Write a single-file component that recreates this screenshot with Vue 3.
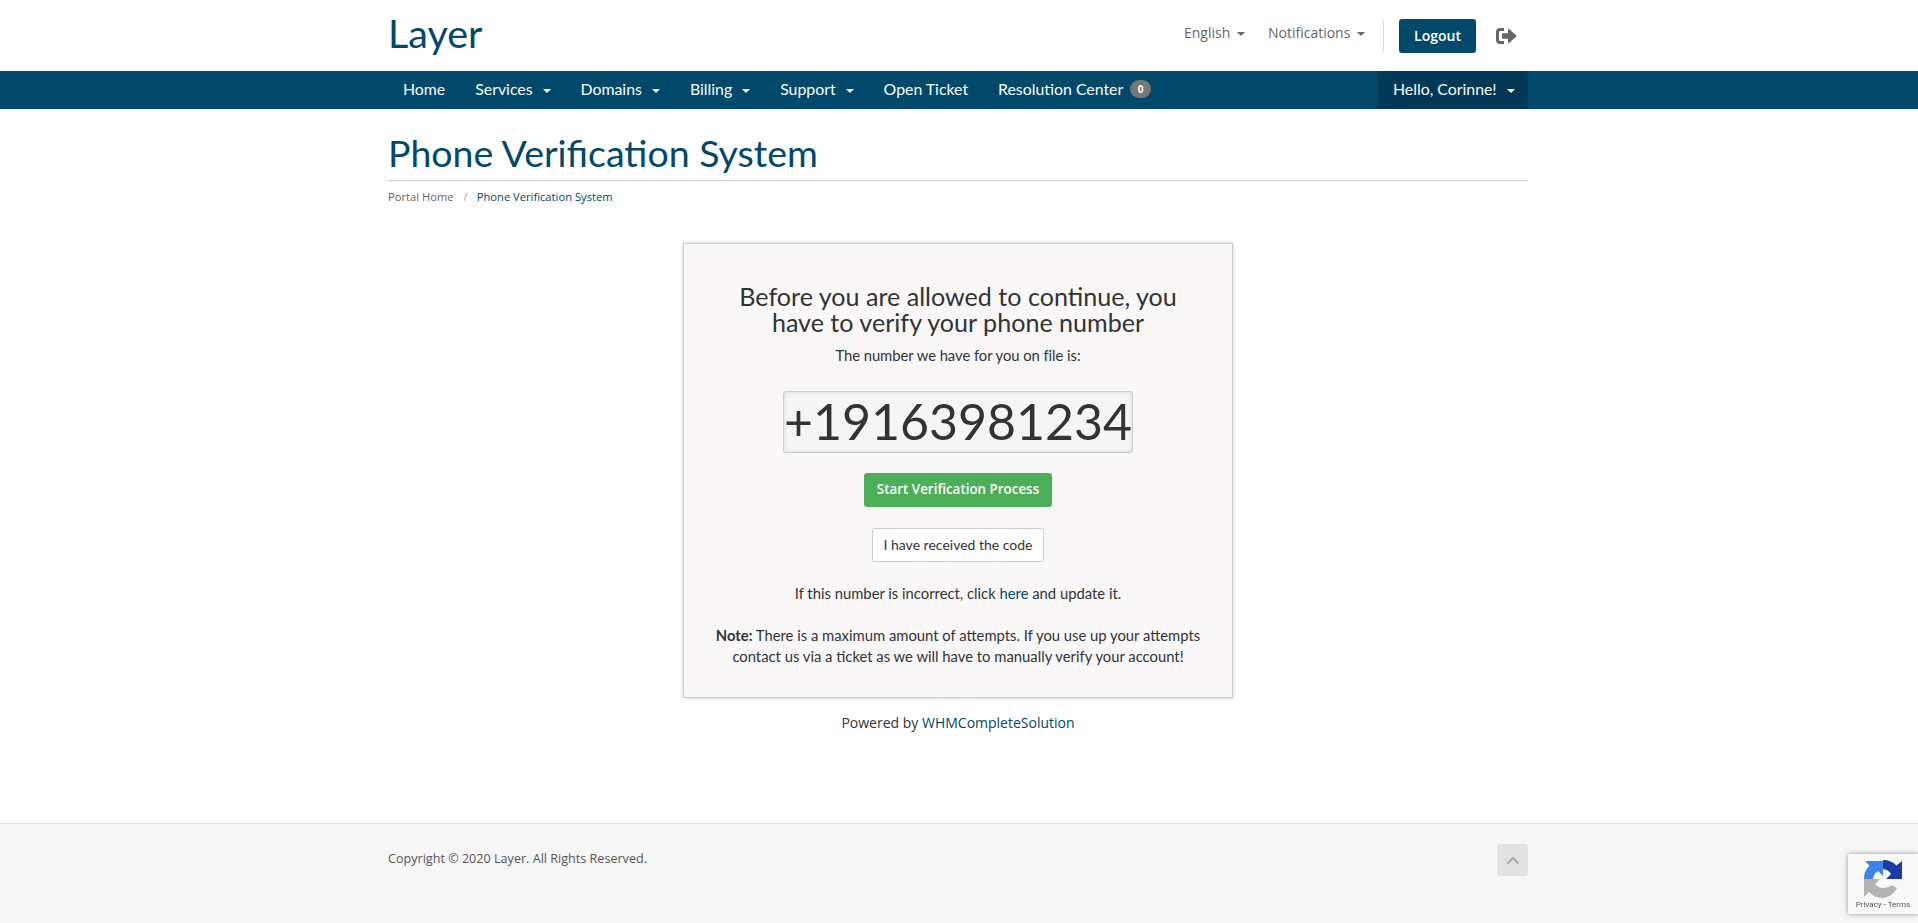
<script setup>
const navItems = [
  { label: 'Home' },
  { label: 'Services', caret: true },
  { label: 'Domains', caret: true },
  { label: 'Billing', caret: true },
  { label: 'Support', caret: true },
  { label: 'Open Ticket' }
]
</script>

<template>
  <div class="page">
    <header class="top">
      <div class="container top-row">
        <a class="logo">Layer</a>
        <div class="top-right">
          <a class="top-link">English <i class="caret"></i></a>
          <a class="top-link">Notifications <i class="caret"></i></a>
          <span class="divider"></span>
          <a class="logout">Logout</a>
          <svg class="signout" width="21" height="16" viewBox="0 0 21 16">
            <path d="M8 1.600H4.200Q1.500 1.600 1.500 4.300V11.700Q1.500 14.400 4.200 14.400H8" fill="none" stroke="#666" stroke-width="3" />
            <path d="M6 5.200H12V1Q12.300 .6 13 1.100L20.800 8 13 14.900Q12.300 15.400 12 15V10.800H6Z" fill="#666" />
          </svg>
        </div>
      </div>
    </header>

    <nav class="nav">
      <div class="container nav-row">
        <a v-for="item in navItems" :key="item.label" class="nav-item">
          {{ item.label }}<i v-if="item.caret" class="caret nav-caret"></i>
        </a>
        <a class="nav-item">Resolution Center<span class="badge">0</span></a>
        <a class="nav-item hello">Hello, Corinne!<i class="caret nav-caret"></i></a>
      </div>
    </nav>

    <main class="container main">
      <h1 class="title">Phone Verification System</h1>
      <div class="crumbs">
        <a class="crumb-home">Portal Home</a>
        <span class="crumb-sep">/</span>
        <a class="crumb-active">Phone Verification System</a>
      </div>

      <section class="box">
        <h2 class="box-title">Before you are allowed to continue, you have to verify your phone number</h2>
        <p class="box-sub">The number we have for you on file is:</p>
        <div class="phone">+19163981234</div>
        <a class="btn btn-green">Start Verification Process</a>
        <a class="btn btn-white">I have received the code</a>
        <p class="incorrect">If this number is incorrect, click <a class="link">here</a> and update it.</p>
        <p class="note"><b>Note:</b> There is a maximum amount of attempts. If you use up your attempts contact us via a ticket as we will have to manually verify your account!</p>
      </section>

      <p class="powered">Powered by <a class="link">WHMCompleteSolution</a></p>
    </main>

    <footer class="footer">
      <div class="container footer-row">
        <span class="copy">Copyright © 2020 Layer. All Rights Reserved.</span>
        <a class="to-top">
          <svg width="14" height="9" viewBox="0 0 14 9">
            <path d="M1.500 7.500 7 2l5.500 5.500" fill="none" stroke="#aaa" stroke-width="2.200" />
          </svg>
        </a>
      </div>
    </footer>

    <aside class="recaptcha">
      <svg width="38" height="38" viewBox="0 0 38 38">
        <path fill="#1c3aa9" d="M19 0A19 19 0 0 1 32.500 5.500L38 1V19H22L27 14A11 11 0 0 0 19 9Z" />
        <path fill="#3b83ee" d="M0 19A19 19 0 0 1 5.500 5.500L1 1H19V16L14 11A11 11 0 0 0 9 19Z" />
        <path fill="#b3b3b3" d="M0 19H16L11 24A11 11 0 0 0 19 28 11 11 0 0 0 27.500 25L33 28A19 19 0 0 1 19 38 19 19 0 0 1 5 32L0 37Z" />
      </svg>
      <span class="rc-text">Privacy - Terms</span>
    </aside>
  </div>
</template>

<style>
html, body { margin: 0; background: #fff; }
</style>

<style scoped>
.page {
  height: 923px;
  display: flex;
  flex-direction: column;
  font-family: "Open Sans", "Liberation Sans", sans-serif;
  color: #333;
  overflow: hidden;
}
.container {
  width: 1140px;
  margin: 0 auto 0 388px;
  box-sizing: border-box;
}
.top { height: 71px; flex: none; }
.top-row {
  height: 100%;
  display: flex;
  align-items: center;
  justify-content: space-between;
}
.logo {
  font-family: Lato, sans-serif;
  font-weight: 400;
  font-size: 39.500px;
  line-height: 1;
  color: #00496b;
  margin-bottom: 5px;
}
.top-right { display: flex; align-items: center; }
.top-link {
  font-size: 14px;
  color: #666;
  margin: 0 23px 6px 0;
  white-space: nowrap;
}
.top-link + .divider { margin-left: -5px; }
.caret {
  display: inline-block;
  width: 0;
  height: 0;
  margin-left: 3px;
  vertical-align: middle;
  border-top: 4px solid;
  border-left: 4px solid transparent;
  border-right: 4px solid transparent;
}
.divider {
  width: 1px;
  height: 34px;
  background: #ddd;
  margin-right: 15px;
}
.logout {
  width: 77px;
  height: 34px;
  box-sizing: border-box;
  padding-bottom: 1px;
  border-radius: 3px;
  background: #00496b;
  color: #fff;
  font-size: 14px;
  font-weight: 600;
  display: flex;
  align-items: center;
  justify-content: center;
}
.signout { margin: 0 11px 0 20px; }
.nav { height: 38px; flex: none; background: #00496b; }
.nav-row { display: flex; height: 100%; }
.nav-item {
  display: flex;
  align-items: center;
  padding: 0 15px 3px;
  box-sizing: border-box;
  color: #fff;
  font-family: Lato, sans-serif;
  font-size: 15.850px;
  white-space: nowrap;
}
.nav-caret { margin: 4px 0 0 10px; }
.badge {
  margin: 1px 0 0 7px;
  width: 21px;
  height: 18px;
  border-radius: 10px;
  background: #777;
  color: #fff;
  font-family: "Open Sans", sans-serif;
  font-size: 10px;
  font-weight: 700;
  display: flex;
  align-items: center;
  justify-content: center;
}
.hello {
  margin-left: auto;
  width: 150px;
  background: #003856;
}
.main { flex: 1; display: flex; flex-direction: column; }
.title {
  margin: 0;
  padding: 19px 0 3px;
  border-bottom: 1px solid #ccc;
  font-family: Lato, sans-serif;
  font-weight: 400;
  font-size: 37.500px;
  line-height: 49px;
  color: #00496b;
}
.crumbs {
  margin-top: 8px;
  font-size: 11.200px;
  line-height: 16px;
  display: flex;
}
.crumb-home { color: #666; }
.crumb-sep { color: #999; margin: 0 9px 0 10px; }
.crumb-active { color: #00496b; }
.box {
  width: 550px;
  height: 455px;
  box-sizing: border-box;
  margin: 38px auto 0;
  padding: 39px 30px 0;
  background: #f9f7f8;
  border: 1px solid #ccc;
  box-shadow: 0 0 4px rgba(0, 0, 0, .2);
  display: flex;
  flex-direction: column;
  align-items: center;
  text-align: center;
  font-family: Lato, sans-serif;
  font-size: 14.800px;
  line-height: 21px;
}
.box-title {
  margin: 0;
  padding: 0 20px;
  font-weight: 400;
  font-size: 25.100px;
  line-height: 26px;
  color: #333;
}
.box-sub { margin: 10px 0 0; letter-spacing: -.05px; }
.phone {
  margin-top: 25px;
  width: 350px;
  height: 62px;
  box-sizing: border-box;
  border: 1px solid #ccc;
  border-radius: 3px;
  background: #f5f5f5;
  box-shadow: inset 0 0 4px rgba(0, 0, 0, .12);
  font-size: 50px;
  line-height: 58px;
  white-space: nowrap;
}
.btn {
  box-sizing: border-box;
  height: 34px;
  padding-bottom: 2px;
  border-radius: 3px;
  display: flex;
  align-items: center;
  justify-content: center;
  font-size: 14px;
}
.btn-green {
  margin-top: 20px;
  width: 188px;
  background: #4cae59;
  color: #fff;
  font-family: "Open Sans", sans-serif;
  font-weight: 600;
  font-size: 13.400px;
}
.btn-white {
  margin-top: 21px;
  width: 172px;
  background: #fff;
  border: 1px solid #ccc;
  color: #333;
  font-family: Lato, sans-serif;
}
.incorrect { margin: 21px 0 0; }
.note { margin: 21px 0 0; }
.note b { font-weight: 700; }
.link { color: #00496b; }
.powered {
  margin: 15px 0 0;
  text-align: center;
  font-size: 14px;
  line-height: 20px;
}
.footer {
  height: 100px;
  box-sizing: border-box;
  border-top: 1px solid #ddd;
  background: #f6f6f6;
  flex: none;
}
.footer-row {
  display: flex;
  justify-content: space-between;
  align-items: flex-start;
  padding-top: 20px;
}
.copy { font-size: 12.600px; line-height: 30px; color: #555; }
.to-top {
  width: 31px;
  height: 32px;
  border-radius: 3px;
  background: #e2e2e2;
  display: flex;
  align-items: center;
  justify-content: center;
}
.recaptcha {
  position: fixed;
  right: 0;
  bottom: 9px;
  width: 70px;
  height: 60px;
  box-sizing: border-box;
  padding-top: 6px;
  background: #f9f9f9;
  border-radius: 2px 0 0 2px;
  box-shadow: 0 0 5px rgba(0, 0, 0, .4);
  display: flex;
  flex-direction: column;
  align-items: center;
}
.rc-text {
  margin-top: 1px;
  font-family: Roboto, sans-serif;
  font-size: 8px;
  line-height: 11px;
  color: #555;
  white-space: nowrap;
}
</style>
